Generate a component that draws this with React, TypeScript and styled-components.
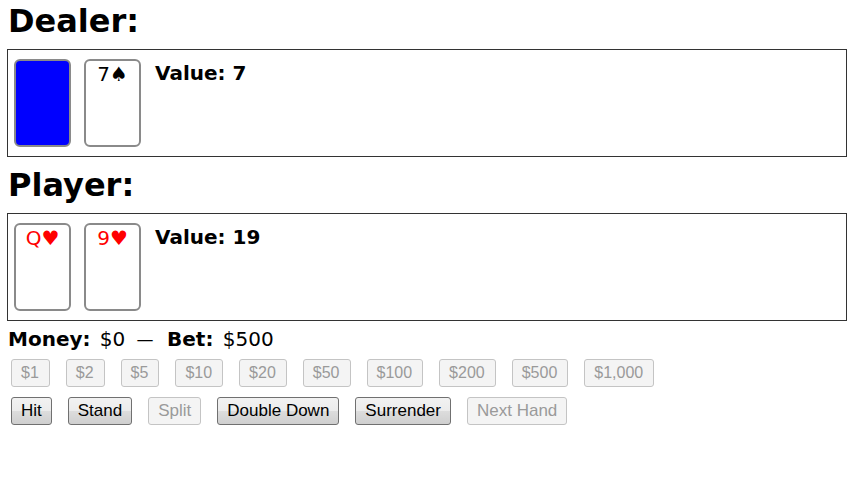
import React from 'react'
import styled, { createGlobalStyle } from 'styled-components'

const GlobalStyle = createGlobalStyle`
  body {
    margin: 0;
    background: #fff;
    color: #000;
    font-family: "DejaVu Sans", Verdana, sans-serif;
  }
`

const Page = styled.div`
  padding: 3px 7px 0;
`

const Heading = styled.h1<{ $gap?: number }>`
  margin: ${p => p.$gap || 0}px 0 0;
  font-size: 32px;
  line-height: 37px;
  font-weight: bold;
  padding-left: 1px;
`

const Hand = styled.div`
  display: flex;
  align-items: flex-start;
  gap: 13px;
  margin-top: 9px;
  padding: 9px 6px;
  border: 1px solid #333;
`

const Card = styled.div<{ $red?: boolean; $back?: boolean }>`
  box-sizing: border-box;
  width: 57px;
  height: 88px;
  border: 2px solid #8a8a8a;
  border-radius: 6px;
  background: ${p => (p.$back ? '#0000ff' : '#fff')};
  color: ${p => (p.$red ? '#ff0000' : '#000')};
  font-size: 20px;
  line-height: 24px;
  text-align: center;
  padding-top: 1px;
`

const Value = styled.div`
  font-size: 20px;
  line-height: 24px;
  font-weight: bold;
  padding-top: 2px;
  padding-left: 1px;
`

const MoneyLine = styled.div`
  margin-top: 7px;
  font-size: 20px;
  line-height: 23px;
  padding-left: 1px;
  word-spacing: 3px;
`

const Label = styled.b``

const Dash = styled.span`
  display: inline-block;
  transform: scaleX(0.85);
  margin-right: 3px;
`

const ButtonRow = styled.div<{ $gap: number }>`
  display: flex;
  gap: 16px;
  margin-top: ${p => p.$gap}px;
  padding-left: 4px;
`

const Button = styled.button<{ $small?: boolean }>`
  box-sizing: border-box;
  height: 28px;
  padding: ${p => (p.$small ? '0 10px 0 9px' : '0 9px')};
  font-family: "Liberation Sans", Arial, sans-serif;
  font-size: ${p => (p.$small ? 16 : 17)}px;
  color: #000;
  border: 1px solid #707070;
  border-radius: 3px;
  background: linear-gradient(#f2f2f2 0%, #ebebeb 50%, #dddddd 50%, #cfcfcf 100%);
  &:disabled {
    color: #9a9a9a;
    border-color: #c4c4c4;
    background: #f4f4f4;
  }
`

const bets = ['$1', '$2', '$5', '$10', '$20', '$50', '$100', '$200', '$500', '$1,000']
const actions = [
  { label: 'Hit', on: true },
  { label: 'Stand', on: true },
  { label: 'Split', on: false },
  { label: 'Double Down', on: true },
  { label: 'Surrender', on: true },
  { label: 'Next Hand', on: false },
]

export default function App() {
  return (
    <Page>
      <GlobalStyle />
      <Heading>Dealer:</Heading>
      <Hand>
        <Card $back />
        <Card>7♠</Card>
        <Value>Value: 7</Value>
      </Hand>
      <Heading $gap={10}>Player:</Heading>
      <Hand>
        <Card $red>Q♥</Card>
        <Card $red>9♥</Card>
        <Value>Value: 19</Value>
      </Hand>
      <MoneyLine>
        <Label>Money:</Label> $0 <Dash>—</Dash> <Label>Bet:</Label> $500
      </MoneyLine>
      <ButtonRow $gap={8}>
        {bets.map(b => (
          <Button key={b} $small disabled>{b}</Button>
        ))}
      </ButtonRow>
      <ButtonRow $gap={10}>
        {actions.map(a => (
          <Button key={a.label} disabled={!a.on}>{a.label}</Button>
        ))}
      </ButtonRow>
    </Page>
  )
}
